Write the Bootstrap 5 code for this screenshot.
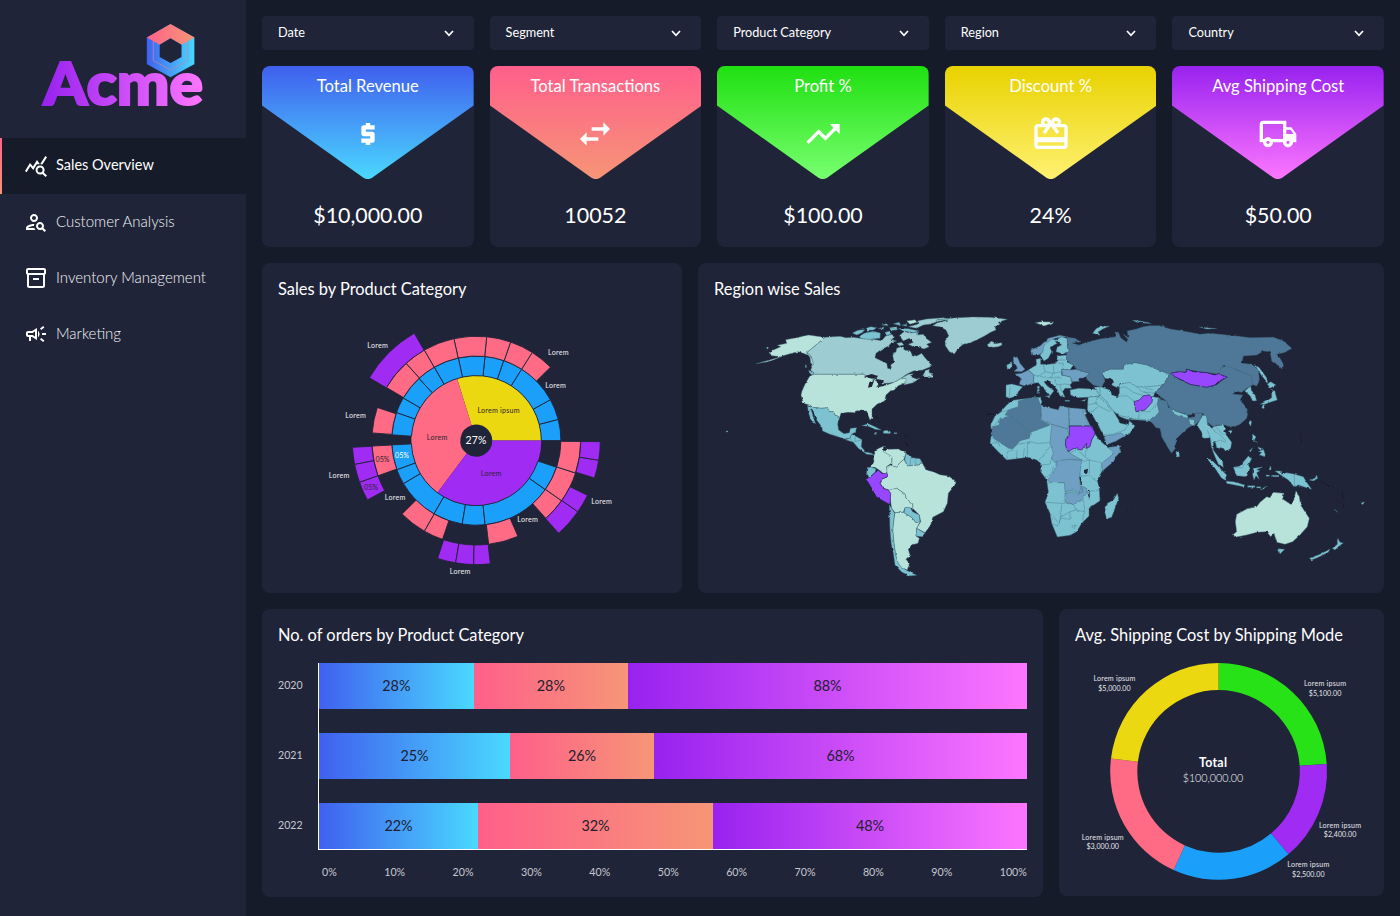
<!DOCTYPE html>
<html lang="en">
<head>
<meta charset="utf-8">
<meta name="viewport" content="width=device-width, initial-scale=1">
<title>Acme – Sales Overview</title>
<link href="https://cdn.jsdelivr.net/npm/bootstrap@5.3.0/dist/css/bootstrap.min.css" rel="stylesheet">
<style>
  :root { --page: #151b28; --panel: #202438; }
  body { background: var(--page); color: #fff; font-family: Lato, "Liberation Sans", sans-serif; font-size: 14px; line-height: 1.25; height: 916px; overflow: hidden; }
  .side { width: 246px; background: var(--panel); }
  .brand { height: 138px; }
  .side .nav-link { height: 56px; padding: 0 0 2px 24px; gap: 8px; color: #f3f4f8; font-weight: 300; font-size: 15px; border-radius: 0; }
  .side .nav-link svg { position: relative; top: 1px; }
  .side .nav-link.active { background: var(--page); color: #fff; font-weight: 400; font-size: 14.5px; padding-left: 22px; border-left: 2px solid; border-image: linear-gradient(#ff628a, #f69676) 1; }
  .grid5 { display: grid; grid-template-columns: repeat(5, 1fr); gap: 16px; }
  .panel { background: var(--panel); border-radius: 8px; }
  .filter { height: 34px; background: var(--panel); border: 0; border-radius: 4px; color: #fff; padding: 0 20px 0 16px; font-size: 12.7px; }
  .kpi { height: 181px; overflow: hidden; }
  .kpi-head { height: 113px; }
  .kpi-title { font-size: 16.6px; line-height: 20px; padding-top: 10px; }
  .kpi-value { font-size: 21.4px; line-height: 26px; padding-top: 23px; }
  .panel-title { font-size: 16.4px; margin: 0; line-height: 20px; padding: 16px 0 0 16px; }
  .row-mid { height: 330px; }
  .row-low { height: 288px; }
  .w-sun { width: 420px; } .w-map { width: 686px; }
  .w-bars { width: 781px; } .w-donut { width: 325px; height: 287px; }
  .chart-body { margin-top: 18px; }
  .years { width: 40px; font-size: 10.6px; color: #c6c8d1; }
  .years div, .stack { height: 46px; }
  .plot { border-left: 1px solid #fff; border-bottom: 1px solid #fff; height: 187px; }
  .stack > div { color: #20202f; font-size: 14.4px; padding-bottom: 1px; }
  .s1 { background: linear-gradient(90deg, #4060ef, #49d9ff); }
  .s2 { background: linear-gradient(90deg, #ff5f8a, #f69676); }
  .s3 { background: linear-gradient(90deg, #9822ef, #fd76ff); }
  .ticks { font-size: 10.7px; color: #c6c8d1; padding: 15px 0 0 4px; }
  svg text { font-family: Lato, "Liberation Sans", sans-serif; }
  .t { fill: #7cc2d1 } .l { fill: #b8e3da } .c { fill: #9dcdd2 } .m { fill: #6f9fc2 } .d { fill: #4f7898 } .p { fill: #9747ff } .sea { fill: #202438 }
  .land path { stroke: #3d6678; stroke-width: 1.3; stroke-linejoin: round }
  .land .b { fill: none; stroke: #47788a }
  .land .p { stroke: #22204e; stroke-width: 2 }
  .land .sea { stroke: none }
  .land .isle { fill: none; stroke: #0c0e16 }
</style>
</head>
<body class="d-flex">
<aside class="side flex-shrink-0 vh-100">
  <div class="brand">
    <svg width="246" height="138" viewBox="0 0 246 138">
      <defs>
        <linearGradient id="lg-a"><stop offset="0" stop-color="#9822ef"/><stop offset="1" stop-color="#fd76ff"/></linearGradient>
        <linearGradient id="lg-b"><stop offset="0" stop-color="#4060ef"/><stop offset="1" stop-color="#49d9ff"/></linearGradient>
        <linearGradient id="lg-c"><stop offset="0" stop-color="#ff628a"/><stop offset="1" stop-color="#f69676"/></linearGradient>
      </defs>
      <text x="43.500" y="104.500" font-size="58.500" font-weight="900" textLength="159.500" lengthAdjust="spacingAndGlyphs" fill="url(#lg-a)" stroke="url(#lg-a)" stroke-width="2.200">Acme</text>
      <path d="M146.500 37.500 170.500 24 194.700 37.500V64.300L170.500 77.500 146.500 64.300Z" fill="url(#lg-b)" stroke="#202438" stroke-width=".6"/>
      <path d="M153.300 41V60.500L170.500 70 187.700 60.500V41" fill="none" stroke="#b48aa8" stroke-width=".8"/>
      <path d="M146.800 37.600 170.500 24 194.500 37.600 181.500 44.700 170.500 38.300 159.700 44.700Z" fill="url(#lg-c)"/>
      <path d="M159.700 44.700 170.500 38.300 181.500 44.700V57L170.500 63 159.700 57Z" fill="#202438"/>
    </svg>
  </div>
  <nav class="nav flex-column">
    <a class="nav-link active d-flex align-items-center" href="#"><svg width="24" height="24" viewBox="0 0 24 24" fill="#fff"><path d="M19.880 18.470c.44-.7.7-1.510.7-2.390 0-2.490-2.010-4.500-4.500-4.500s-4.500 2.010-4.500 4.500 2.010 4.500 4.490 4.500c.88 0 1.700-.26 2.390-.7L21.580 23 23 21.580l-3.120-3.110zm-3.800.11a2.500 2.500 0 0 1 0-5 2.500 2.500 0 0 1 0 5zm-.36-8.500c-.74.02-1.450.18-2.100.45l-.55-.83-3.800 6.180-3.010-3.520-3.630 5.810L1 17l5-8 3 3.500L13 6l2.720 4.080zm2.590.5c-.64-.28-1.330-.45-2.050-.49L21.380 2 23 3.180l-4.690 7.400z"/></svg><span>Sales Overview</span></a>
    <a class="nav-link d-flex align-items-center" href="#"><svg width="24" height="24" viewBox="0 0 24 24" fill="#fff"><path d="M10 12c2.210 0 4-1.790 4-4s-1.790-4-4-4-4 1.790-4 4 1.790 4 4 4zm0-6c1.100 0 2 .9 2 2s-.9 2-2 2-2-.9-2-2 .9-2 2-2zM4 18c.22-.72 3.310-2 6-2 0-.7.13-1.370.35-1.990C7.620 13.910 2 15.270 2 18v2h9.540c-.52-.58-.93-1.250-1.190-2H4zM19.430 18.020c.36-.59.57-1.280.57-2.020 0-2.210-1.790-4-4-4s-4 1.790-4 4 1.790 4 4 4c.74 0 1.430-.22 2.020-.57L20.590 22 22 20.590l-2.570-2.570zM16 18c-1.100 0-2-.9-2-2s.9-2 2-2 2 .9 2 2-.9 2-2 2z"/></svg><span>Customer Analysis</span></a>
    <a class="nav-link d-flex align-items-center" href="#"><svg width="24" height="24" viewBox="0 0 24 24" fill="#fff"><path d="M20 2H4c-1 0-2 .9-2 2v3.010c0 .72.43 1.340 1 1.690V20c0 1.100 1.100 2 2 2h14c.9 0 2-.9 2-2V8.700c.57-.35 1-.97 1-1.690V4c0-1.100-1-2-2-2zm-1 18H5V9h14v11zm1-13H4V4h16v3zM9 12h6v2H9z"/></svg><span>Inventory Management</span></a>
    <a class="nav-link d-flex align-items-center" href="#"><svg width="24" height="24" viewBox="0 0 24 24" fill="#fff"><path d="M18 11v2h4v-2h-4zM16 17.610c.96.71 2.210 1.650 3.200 2.390.4-.53.8-1.070 1.200-1.600-.99-.74-2.240-1.680-3.200-2.400-.4.54-.8 1.080-1.200 1.610zM20.400 5.600c-.4-.53-.8-1.070-1.200-1.600-.99.74-2.240 1.680-3.200 2.400.4.53.8 1.070 1.200 1.600.96-.72 2.210-1.650 3.200-2.400zM4 9c-1.100 0-2 .9-2 2v2c0 1.100.9 2 2 2h1v4h2v-4h1l5 3V6L8 9H4zm5.030 1.710L11 9.530v4.940l-1.970-1.180-.48-.29H4v-2h4.550l.48-.29zM15.500 12c0-1.330-.58-2.530-1.500-3.350v6.690c.92-.81 1.500-2.010 1.500-3.340z"/></svg><span>Marketing</span></a>
  </nav>
</aside>

<main class="flex-grow-1 p-3 d-flex flex-column gap-3">
  <div class="grid5" id="filters"></div>
  <div class="grid5" id="kpis"></div>

  <div class="d-flex gap-3 row-mid">
    <section class="panel w-sun">
      <h2 class="panel-title fw-normal">Sales by Product Category</h2>
      <svg id="sunburst" width="420" height="290" viewBox="262 299 420 290"></svg>
    </section>
    <section class="panel w-map">
      <h2 class="panel-title fw-normal">Region wise Sales</h2>
      <svg width="686" height="290" viewBox="698 299 686 290">
        <defs><filter id="coast" x="0" y="0" width="1" height="1" filterUnits="objectBoundingBox" color-interpolation-filters="sRGB"><feTurbulence type="fractalNoise" baseFrequency=".2" numOctaves="2" seed="4"/><feDisplacementMap in="SourceGraphic" scale="2.400" xChannelSelector="R" yChannelSelector="G"/></filter></defs>
        <g filter="url(#coast)" class="land">
          <path d="M700 300h1v1zM1383 587h1v1z" class="sea"/>
          <g transform="translate(740 305) scale(.33333)">
            <path class="c" d="M255 97 300 94 318 98 340 97 370 101 400 103 425 107 437 93 456 88 463 98 450 103 470 108 455 112 446 123 425 133 408 145 405 158 425 168 440 175 443 190 455 193 452 180 462 172 458 150 468 140 470 130 482 125 494 135 510 137 517 150 530 153 545 145 555 158 570 175 572 185 548 195 520 198 500 208 483 220 505 208 520 206 512 215 530 222 540 219 520 233 500 238 492 240 498 221 480 222 465 231 445 235 420 235 415 227 397 222 370 208 220 208 212 195 218 180 214 155 200 143Z"/>
            <path class="c" d="M548 212 556 198 568 192 567 202 578 208 577 218 560 214Z"/>
            <path class="c" d="M478 92 492 80 515 84 535 80 530 90 550 88 558 100 575 112 560 118 568 125 552 132 535 126 520 125 505 118 520 112 508 100 490 108Z M470 115 485 112 492 120 478 123Z"/>
            <path class="t" d="M337 84 355 75 375 74 365 84 350 90Z M358 95 372 85 400 79 421 84 420 100 390 103 365 101Z M378 70 392 65 410 68 400 75 385 76Z M415 70 432 66 430 73Z M435 82 450 78 455 86 440 92Z M448 68 470 65 472 75 455 76Z M475 70 505 71 538 78 520 83 490 78Z M425 60 440 56 445 62Z M460 56 478 52 482 62Z M485 60 500 58 500 64Z"/>
            <path class="c" d="M535 47 560 42 610 38 628 42 590 50 575 57 550 60 530 70 505 65 532 58Z"/>
            <path class="l" d="M500 48 525 44 531 52 510 58Z M453 68 470 66 467 72Z"/>
            <path class="c" d="M578 62 592 53 625 45 590 44 650 38 700 36 750 37 802 43 775 52 780 58 765 65 768 75 752 82 735 92 710 105 690 113 670 118 655 130 643 147 628 140 616 122 615 108 626 92 618 75 600 65Z"/>
            <path class="l" d="M50 176 86 166 120 156 112 154 95 152 87 142 100 135 122 125 112 121 140 115 137 104 175 97 205 90 255 97 200 143 208 152 190 145 175 140 155 145 130 152 100 165 80 171Z"/>
            <path class="l" d="M220 208 370 208 397 222 410 228 415 240 410 245 440 240 465 231 480 222 497 220 500 232 475 242 462 256 452 257 438 270 434 288 412 297 396 312 396 340 390 345 384 330 380 318 350 317 345 323 325 322 303 325 298 340 285 330 280 320 268 320 262 308 245 310 220 307 208 300 190 295 183 270 186 258 195 238 208 215Z"/>
            <path class="c" d="M200 143 210 150 218 165 220 180 212 175 210 158Z"/><path class="t" d="M206 195 222 207 216 210 208 203Z M195 180 199 180 199 188Z M77 128 86 128 82 133Z"/>
            <path class="sea" d="M372 214 395 207 413 213 410 222 390 219Z M384 248 388 232 402 224 396 245Z M408 222 432 226 427 237 412 233Z M408 247 430 238 432 243Z"/>
            <path class="t" d="M202 301 220 307 245 310 262 308 268 320 280 320 285 330 298 340 293 357 296 375 312 386 328 383 332 370 350 368 346 382 335 387 330 400 312 402 295 395 270 388 248 378 245 365 230 345 216 312 212 312 217 328 227 357 213 345 205 322Z"/>
            <path class="t" d="M316 404 330 400 335 387 350 395 366 404 364 425 377 441 395 445 402 450 380 448 355 430 340 412Z"/>
            <path class="t" d="M365 362 385 356 405 365 424 375 405 373 385 364Z M430 378 440 376 452 381 450 386 430 385Z M462 383h9v3h-9z M402 385h8v3h-8z"/>
            <path class="b" d="M330 400 340 412 M345 392 345 410 366 404"/>
            <path class="isle" d="M408 335 412 342M415 348 422 352M430 360 434 364M495 390 500 400M498 410 500 425"/>
          </g>
          <g transform="translate(820 430) scale(.33333)">
            <path class="l" d="M160 80 170 58 192 48 190 62 215 78 216 98 200 110 202 130 198 138 180 122 165 112 152 112 162 95Z"/>
            <path class="l" d="M192 48 200 58 235 57 258 70 252 88 240 98 228 112 216 108 216 80 190 65Z"/>
            <path class="t" d="M258 70 275 83 300 86 305 95 298 105 262 108 254 90Z"/><path class="b" d="M273 84 270 106 M288 86 288 105"/>
            <path class="l" d="M228 112 240 98 252 88 262 108 298 105 305 95 318 120 340 125 360 134 385 138 403 150 405 165 385 190 382 220 370 245 338 262 332 285 315 308 290 295 302 275 298 255 278 235 278 222 258 205 255 192 230 175 210 182 190 175 180 160 185 148 202 140 200 110 212 105Z"/>
            <path class="t" d="M142 115 152 111 168 116 165 128 148 143 140 130Z"/>
            <path class="l" d="M205 180 230 175 255 192 258 205 278 222 278 235 255 233 250 247 225 248 215 235 210 205Z"/>
            <path class="l" d="M225 248 250 247 275 262 288 278 302 272 290 295 288 318 298 325 294 340 275 345 265 358 270 375 258 388 268 400 262 420 240 412 232 395 226 372 222 340 218 300 222 265Z"/>
            <path class="t" d="M255 233 270 232 278 245 298 255 300 275 288 278 275 262 252 248Z M290 295 315 310 305 320 288 318Z"/>
            <path class="t" d="M208 224 215 235 224 250 222 265 218 300 222 340 226 372 235 400 245 412 262 422 290 436 270 438 245 426 225 405 220 370 214 345 210 300Z"/>
            <path class="p" d="M136 143 148 143 165 128 175 120 185 130 200 131 202 140 185 148 180 160 190 175 205 180 212 190 210 224 170 202 155 175Z"/>
            <path class="sea" d="M190 50h8v12h-7z"/>
          </g>
          <g transform="translate(970 310) scale(.33333)">
            <path class="c" d="M52 103 65 97 75 101 95 98 96 105 85 110 70 112 58 110Z"/>
            <path class="l" d="M196 38 215 35 252 36 240 42 222 48Z"/>
            <path class="t" d="M368 70 378 56 390 50 420 48 400 56 384 66 390 76Z M488 31 510 33 545 40 515 39Z"/>
            <path class="t" d="M128 271 150 268 180 265 210 262 216 275 212 285 232 295 265 300 270 288 300 295 345 298 350 310 345 315 360 345 375 372 388 390 408 408 415 414 452 408 450 425 430 450 395 485 382 510 388 540 390 572 357 595 357 618 335 640 320 665 300 676 262 681 245 640 240 610 225 577 235 545 230 510 212 485 212 460 200 450 175 442 110 450 85 425 60 400 65 370 62 345 75 318 90 308 110 285Z"/>
            <path class="d" d="M145 273 175 265 203 262 208 275 215 300 212 330 240 345 182 367 120 318 105 315 115 300 145 290Z"/>
            <path class="d" d="M105 322 120 318 182 367 178 385 150 392 128 417 115 415 95 400 65 382 66 350 88 345 90 325Z"/>
            <path class="m" d="M212 285 232 292 265 300 270 288 296 293 298 347 293 357 240 342 215 330Z M296 293 345 298 348 308 338 303 358 347 298 347Z"/>
            <path class="m" d="M245 343 293 357 298 380 288 385 287 415 300 430 335 450 300 448 255 458 245 445 250 430 240 400Z"/>
            <path class="m" d="M262 452 300 448 335 452 330 490 328 520 340 545 325 550 310 540 285 545 283 518 245 518 232 510 250 490Z M285 548 310 545 325 555 335 528 350 535 350 550 328 575 312 582 285 578Z"/>
            <path class="m" d="M415 412 452 408 448 425 430 455 398 482 395 460 432 430Z"/>
            <path class="b" d="M120 330 125 385 90 388 M60 400 85 398 90 410 M110 450 112 425 130 420 M140 447 142 420 M160 443 163 415 M172 441 172 405 182 395 M130 410 150 400 178 400 182 395 200 400 240 398 M215 300 205 285 M207 450 225 430 240 410 M212 465 240 462 245 445 M225 503 245 490 250 470 M232 518 283 518 M225 577 310 582 M240 610 268 640 272 618 275 585 M245 640 262 648 275 620 300 605 M310 582 318 600 300 605 300 628 275 625 M318 600 345 605 340 570 328 575 M340 640 338 620 345 605 M358 570 352 545 388 540 M335 500 355 495 382 515 M330 490 335 500 M335 452 358 450 358 490 M375 372 355 405 345 440 358 450 395 458 M300 430 320 418 345 440 M395 460 392 485 M388 390 415 414 M305 648 318 645 312 656Z M75 345 90 325 M90 308 115 300"/>
            <path class="p" d="M298 348 367 348 375 372 365 390 360 410 348 415 350 400 335 420 312 415 295 425 286 405 288 385 298 380Z"/>
            <path class="sea" d="M342 480 354 476 352 490 342 492Z M328 500 332 500 336 525 332 525Z M354 540 358 540 360 565 355 558Z"/>
            <path class="t" d="M442 550 446 565 425 622 410 626 404 605 412 580 430 570Z"/>
            <path class="t" d="M108 225 125 222 158 230 145 245 140 258 118 265 108 260Z"/><path class="b" d="M120 232 118 262"/>
            <path class="m" d="M135 192 155 190 175 180 192 195 190 220 165 228 148 223 153 205Z"/>
            <path class="m" d="M130 142 140 138 146 150 150 160 165 178 155 185 132 184 142 175 138 165 130 160Z"/><path class="t" d="M110 165 125 158 127 172 112 178Z"/>
            <path class="m" d="M182 120 210 108 235 85 270 76 290 80 255 85 235 100 215 130 205 135 185 135Z"/>
            <path class="t" d="M210 135 218 125 222 105 245 88 258 90 262 100 240 112 245 125 235 145 222 153Z M258 90 275 80 290 85 298 125 280 132 258 125 262 110 275 105Z"/>
            <path class="t" d="M190 170 200 165 198 148 212 145 212 163 235 163 260 160 262 138 290 135 290 155 310 165 300 180 275 178 275 195 300 200 308 215 300 225 305 235 285 235 278 245 285 262 270 258 262 240 250 225 235 212 222 215 232 228 252 242 240 258 234 248 215 230 205 218 190 220 192 195 175 180Z"/>
            <path class="b" d="M220 165 225 185 205 200 M225 185 250 190 275 185 M250 165 252 190 M230 205 250 200 275 205 M250 190 240 205 M262 150 285 150 M258 160 280 160 280 178 M255 205 260 225 285 222 300 225 M270 225 275 245 M192 195 215 200 230 205"/>
            <path class="m" d="M275 178 300 180 320 178 358 190 350 203 325 205 328 214 308 215 300 200 275 195Z"/>
            <path class="t" d="M202 228h6v8h-6z M202 238h6v12h-6z M228 258 240 257 238 264Z M285 271h14v3h-14z M335 272 348 268 342 275Z"/>
            <path class="t" d="M300 240 325 235 370 237 392 245 390 258 355 262 320 263 302 255Z"/>
            <path class="t" d="M354 262 390 258 372 232 395 230 420 248 425 262 440 270 470 258 495 268 490 280 505 305 540 300 555 265 570 262 570 310 560 325 555 340 535 332 470 328 450 320 430 303 452 340 475 345 478 332 495 348 478 372 450 385 410 403 400 375 370 320 352 300Z"/>
            <path class="b" d="M355 285 375 280 385 260 M375 280 390 290 420 305 M385 260 405 275 425 303 M400 375 430 372 465 360 470 345 M390 245 410 252 M352 300 365 305 385 290 M535 305 540 328"/>
            <path class="m" d="M403 378 430 375 455 368 463 378 440 392 410 404Z"/>
            <path class="isle" d="M55 314 75 312M14 380 20 386M470 600 474 602M484 597 487 596"/>
          </g>
          <g transform="translate(1100 305) scale(.33333)">
            <path class="d" d="M-100 97-75 100-60 110-85 115-62 120-40 112 0 102 50 95 45 82 55 82 62 98 80 112 85 105 70 88 85 98 82 78 110 72 130 65 150 62 180 62 210 72 260 80 300 88 330 85 400 92 450 98 520 97 550 108 575 130 555 142 530 148 540 160 550 178 548 193 515 165 510 140 490 138 470 150 430 153 425 175 455 178 475 195 478 225 470 243 455 238 455 215 410 195 370 180 362 188 365 210 340 205 300 200 258 192 255 200 215 203 208 208 175 195 140 180 105 173 72 180 70 193 30 193 6 205 15 225 5 247-20 240-45 218-32 205-70 193-80 180-100 165-100 150-92 135Z"/>
            <path class="t" d="M6 205 30 193 70 193 72 180 105 173 140 180 175 195 208 208 190 240 150 250 130 258 115 250 90 240 60 235 55 250 35 240 40 225 15 220Z"/>
            <path class="t" d="M58 238 90 232 110 245 150 245 188 240 165 262 160 275 175 278 188 290 175 305 178 325 165 350 150 345 105 342 60 332 40 318 20 290 0 270 0 245 30 255 50 275 58 265Z"/>
            <path class="b" d="M58 250 75 245 100 262 130 272 M110 245 130 262 155 262 M135 250 160 255 M50 275 80 272 105 290 M108 320 150 320 175 290 M118 322 115 342 M130 258 150 270 165 262"/>
            <path class="sea" d="M12 228 30 218 42 228 32 240 55 262 55 275 35 270 28 250Z"/>
            <path class="d" d="M208 208 215 205 240 225 270 238 320 246 350 240 380 215 362 210 362 185 380 180 410 195 455 213 458 240 440 250 425 262 405 258 400 268 428 270 420 285 445 315 440 340 420 358 395 368 375 360 350 360 340 365 320 350 310 325 290 325 270 330 240 322 215 315 195 285 165 262 190 240Z"/>
            <path class="d" d="M175 278 200 290 205 305 240 325 265 338 285 335 285 325 308 325 300 345 285 360 275 362 262 370 228 402 226 430 215 445 205 430 185 395 180 370 168 368 150 345 165 335 178 320 172 300Z"/>
            <path class="t" d="M215 315 265 331 262 340 235 333 218 325Z M266 342 282 345 284 362 270 358Z M228 438 238 445 238 456 230 455Z"/>
            <path class="t" d="M300 345 308 330 320 333 322 355 335 370 345 363 370 360 378 372 370 378 395 412 392 430 378 440 370 430 350 425 345 410 340 415 340 435 355 455 368 470 370 487 355 478 345 455 335 430 330 398 312 400 300 375 292 358Z"/>
            <path class="b" d="M322 375 330 395 335 412 M335 370 355 385 380 410 M345 412 360 405 378 412 M345 363 370 390"/>
            <path class="t" d="M320 460 335 465 360 490 380 510 380 527 365 520 345 490Z M378 528 400 530 435 540 430 545 385 536Z M443 542h22v5h-22z M470 545h12v4h-12z M480 552 500 543 490 553Z M400 487 420 483 435 465 445 453 455 462 445 480 450 490 440 515 410 512Z M460 490 487 486 470 494 480 497 470 503 478 523 468 512 462 525 458 510Z M457 387 468 395 462 408 477 414 458 405Z M470 425 485 430 482 436Z M475 440 490 432 498 455 478 450 485 442Z M508 485h5v10h-5z M498 510h10v4h-10z M515 511h20v4h-20z M448 438 458 428 452 440Z"/>
            <path class="t" d="M525 498 545 498 545 508 560 503 585 508 610 515 622 535 635 553 610 545 595 540 582 545 565 525 545 512Z M628 525 645 520 650 510 653 520 640 528Z"/><path class="b" d="M583 508V544 M405 488 425 488 440 470"/>
            <path class="t" d="M450 346 455 350 452 364 447 355Z M385 378 398 375 392 386Z M434 258 452 243 454 256 465 270 470 287 458 288 450 272Z M463 178 478 188 500 218 504 235 485 212Z M502 237 512 230 528 240 510 250Z M515 252 525 262 532 285 515 290 495 298 480 298 500 288 515 278Z M486 299 494 299 492 308 486 306Z"/>
            <path class="l" d="M410 628 440 612 470 605 480 592 500 575 510 578 520 562 552 565 548 582 572 598 580 590 588 557 598 575 602 600 615 620 628 640 622 665 600 690 578 710 555 718 530 712 522 685 512 695 500 680 470 682 440 690 405 697 400 688 410 680 406 650Z"/>
            <path class="t" d="M534 731 554 733 540 747Z M712 697 720 712 730 714 715 725 705 735 697 730 712 718Z M690 732 685 742 655 757 635 765 628 760 660 748Z M98 46 130 52 155 55 110 52Z M298 66 350 71 320 72Z M702 612 714 622 708 618Z M783 595 795 589 788 599Z"/>
            <path class="isle" d="M662 528 690 545M725 560 733 585M728 595 732 610M697 542 700 548M603 385 604 412"/>
            <path class="p" d="M213 205 235 200 255 202 260 192 280 200 320 203 345 210 355 205 382 217 355 230 345 240 320 247 270 238 245 225 225 215Z M102 290 118 285 130 272 148 270 158 275 156 292 135 315 108 320Z"/>
          </g>
        </g>
        <circle cx="727" cy="431.500" r=".8" fill="#7cc2d1"/>
      </svg>
    </section>
  </div>

  <div class="d-flex gap-3 row-low">
    <section class="panel w-bars">
      <h2 class="panel-title fw-normal">No. of orders by Product Category</h2>
      <div class="d-flex px-3 chart-body">
        <div class="years d-flex flex-column gap-4" id="years"></div>
        <div class="flex-grow-1">
          <div class="plot d-flex flex-column gap-4" id="plot"></div>
          <div class="ticks d-flex justify-content-between" id="ticks"></div>
        </div>
      </div>
    </section>
    <section class="panel w-donut">
      <h2 class="panel-title fw-normal">Avg. Shipping Cost by Shipping Mode</h2>
      <svg id="donut" width="325" height="245" viewBox="1059 645 325 245"></svg>
    </section>
  </div>
</main>

<script src="https://cdn.jsdelivr.net/npm/bootstrap@5.3.0/dist/js/bootstrap.bundle.min.js"></script>
<script>
const $ = id => document.getElementById(id);

$('filters').innerHTML = ['Date', 'Segment', 'Product Category', 'Region', 'Country'].map(t =>
  `<button class="filter d-flex align-items-center justify-content-between"><span>${t}</span><svg width="10" height="7" viewBox="0 0 10 7"><path d="M1 1 5 5.300 9 1" fill="none" stroke="#fff" stroke-width="1.700"/></svg></button>`).join('');

const icons = {
  money: '<path transform="translate(12 12) scale(1.330) translate(-12 -12)" d="M11 17h2v-1h1c.55 0 1-.45 1-1v-3c0-.55-.45-1-1-1h-3v-1h4V8h-2V7h-2v1h-1c-.55 0-1 .45-1 1v3c0 .55.45 1 1 1h3v1H9v2h2v1z"/>',
  swap: '<path d="M6.990 11L3 15l3.990 4v-3H14v-2H6.990v-3zM21 9l-3.990-4v3H10v2h7.010v3L21 9z"/>',
  trend: '<path d="M16 6l2.290 2.290-4.880 4.880-4-4L2 16.590 3.410 18l6-6 4 4 6.300-6.290L22 12V6z"/>',
  gift: '<path d="M20 6h-2.180c.11-.31.18-.65.18-1 0-1.660-1.340-3-3-3-1.050 0-1.960.54-2.500 1.350l-.5.67-.5-.68C10.960 2.540 10.050 2 9 2 7.340 2 6 3.340 6 5c0 .35.07.69.18 1H4c-1.110 0-1.990.89-1.990 2L2 19c0 1.110.89 2 2 2h16c1.110 0 2-.89 2-2V8c0-1.110-.89-2-2-2zm-5-2c.55 0 1 .45 1 1s-.45 1-1 1-1-.45-1-1 .45-1 1-1zM9 4c.55 0 1 .45 1 1s-.45 1-1 1-1-.45-1-1 .45-1 1-1zm11 15H4v-2h16v2zm0-5H4V8h5.080L7 10.830 8.620 12 12 7.400l3.380 4.600L17 10.830 14.920 8H20v6z"/>',
  truck: '<path d="M20 8h-3V4H3c-1.100 0-2 .9-2 2v11h2c0 1.660 1.340 3 3 3s3-1.340 3-3h6c0 1.660 1.340 3 3 3s3-1.340 3-3h2v-5l-3-4zm-.5 1.500l1.960 2.500H17V9.500h2.500zM6 18c-.55 0-1-.45-1-1s.45-1 1-1 1 .45 1 1-.45 1-1 1zm2.220-3c-.55-.61-1.330-1-2.220-1s-1.670.39-2.220 1H3V6h12v9H8.220zM18 18c-.55 0-1-.45-1-1s.45-1 1-1 1 .45 1 1-.45 1-1 1z"/>'
};
$('kpis').innerHTML = [
  ['Total Revenue', '$10,000.00', 'money', '#405fee', '#4ad8ff'],
  ['Total Transactions', '10052', 'swap', '#ff5f8b', '#f69576'],
  ['Profit %', '$100.00', 'trend', '#1fe010', '#78ff70'],
  ['Discount %', '24%', 'gift', '#e8d200', '#fff171'],
  ['Avg Shipping Cost', '$50.00', 'truck', '#9822ef', '#fd76ff']
].map(([t, v, i, a, b], n) => `<section class="panel kpi text-center">
  <div class="kpi-head"><svg width="100%" height="113" viewBox="0 0 211.600 113" preserveAspectRatio="none" style="display:block;margin-bottom:-113px">
    <linearGradient id="k${n}" x2="0" y2="1"><stop stop-color="${a}"/><stop offset="1" stop-color="${b}"/></linearGradient>
    <path fill="url(#k${n})" d="M0 0H211.600V39.500L109.800 112Q105.800 114.300 101.800 112L0 39.500Z"/></svg>
    <div class="kpi-title position-relative">${t}</div>
    <svg class="position-relative" style="margin-top:18px" width="40" height="40" viewBox="0 0 24 24" fill="#fff">${icons[i]}</svg></div>
  <div class="kpi-value">${v}</div></section>`).join('');

const rad = d => d * Math.PI / 180;
const pt = (cx, cy, r, a) => (cx + r * Math.cos(rad(a))).toFixed(2) + ' ' + (cy - r * Math.sin(rad(a))).toFixed(2);
const arc = (cx, cy, r0, r1, a, b, fill, line) => {
  const big = b - a > 180 ? 1 : 0;
  return `<path fill="${fill}" ${line ? 'stroke="#202438" stroke-width=".9"' : ''} d="M${pt(cx, cy, r1, a)}A${r1} ${r1} 0 ${big} 0 ${pt(cx, cy, r1, b)}L${pt(cx, cy, r0, b)}A${r0} ${r0} 0 ${big} 1 ${pt(cx, cy, r0, a)}Z"/>`;
};
const label = (x, y, t, fill = '#fff', size = 7.1, len = 0, extra = '') =>
  `<text x="${x}" y="${y + size * .36}" text-anchor="middle" font-size="${size}" fill="${fill}" ${len ? `textLength="${len}"` : ''} ${extra}>${t}</text>`;

const BLUE = '#1aa0fb', PINK = '#ff6b85', PURPLE = '#a02bf3', YELLOW = '#ecd811', GREEN = '#27e217';
const rings = [
  [65, 84.6, BLUE, [[0, 14.5, 28.9, 57.6, 71.1, 84.1, 102.3, 119.8, 132.7, 149.8, 160.7, 176.1], [182.9, 200.2, 210.6, 240, 260.4, 276, 324.6, 341.6]]],
  [84.6, 104.4, PINK, [[44.7, 57.6, 70.8, 84.3, 102.4, 119.9, 132.3, 149.4], [161.5, 175.8], [183, 199.7], [224.7, 240.2, 251.1], [276.8, 293.5], [311.8, 324.8, 341.9, 359.5]]],
  [104.4, 124, PURPLE, [[120, 149.6], [183.1, 191.1, 199.7, 208.6], [251.8, 260.4, 268.8, 276.5], [311.6, 325, 333.8], [342.4, 350.9, 359.5]]]
];
const CX = 476.3, CY = 440.6;
let s = arc(CX, CY, 16, 65, 0, 107.2, YELLOW) + arc(CX, CY, 16, 65, 107.2, 233.2, PINK) + arc(CX, CY, 16, 65, 233.2, 360, PURPLE);
for (const [r0, r1, col, runs] of rings)
  for (const run of runs)
    for (let i = 1; i < run.length; i++) s += arc(CX, CY, r0, r1, run[i - 1], run[i], col, true);
for (const [x, y] of [[377.5, 345], [355.5, 415.3], [339, 475], [395, 497], [460, 571.5], [558.3, 352.6], [555.5, 385.3], [601.5, 501.5], [527.5, 519.3]])
  s += label(x, y, 'Lorem', '#f1f1f4', 7.1, 20.5);
s += label(498.5, 410, 'Lorem ipsum', '#2a2530', 7.1, 42) + label(437, 437.2, 'Lorem', '#2a2530', 7.1, 20.5) + label(491, 473, 'Lorem', '#2a2530', 7.1, 20.5);
s += label(382.5, 459.5, '05%', '#2a2530', 7.1, 14) + label(402, 455.5, '05%', '#fff', 7.1, 14) + label(371, 487, '05%', '#2a2530', 7.1, 14);
s += label(476, 440.5, '27%', '#fff', 10.5, 21);
$('sunburst').innerHTML = s;

let d = '';
const cuts = [[0, 86.1, GREEN], [86.1, 139.9, PURPLE], [139.9, 204.5, BLUE], [204.5, 276.9, PINK], [276.9, 360, YELLOW]];
for (const [a, b, col] of cuts) d += arc(1218.6, 771.4, 81.3, 108.4, 90 - b, 90 - a, col);
for (const [x, y, v] of [[1114.4, 678.5, '$5,000.00'], [1325, 683.3, '$5,100.00'], [1340, 825, '$2,400.00'], [1308.3, 864.5, '$2,500.00'], [1102.7, 837, '$3,000.00']])
  d += label(x, y, 'Lorem ipsum', '#e6e7ec', 7.1, 42) + label(x, y + 9.8, v, '#e6e7ec', 7.1, 32.5);
d += label(1213, 762.5, 'Total', '#fff', 12.4, 28, 'font-weight="700"') + label(1213, 778, '$100,000.00', '#f3f4f8', 10.7, 60.5, 'font-weight="300"');
$('donut').innerHTML = d;

// each segment: printed value, drawn length out of 708
const orders = [
  [2020, [28, 154.6], [28, 154.5], [88, 398.9]],
  [2021, [25, 191], [26, 144], [68, 373]],
  [2022, [22, 159], [32, 235], [48, 314]]
];
$('years').innerHTML = orders.map(o => `<div class="d-flex align-items-center">${o[0]}</div>`).join('');
$('plot').innerHTML = orders.map(([, ...segs]) => '<div class="stack d-flex">' + segs.map(([v, w], i) =>
  `<div class="s${i + 1} d-flex align-items-center justify-content-center" style="width:${(w / 7.08).toFixed(2)}%">${v}%</div>`).join('') + '</div>').join('');
$('ticks').innerHTML = Array.from({ length: 11 }, (_, i) => `<span>${i * 10}%</span>`).join('');
</script>
</body>
</html>
